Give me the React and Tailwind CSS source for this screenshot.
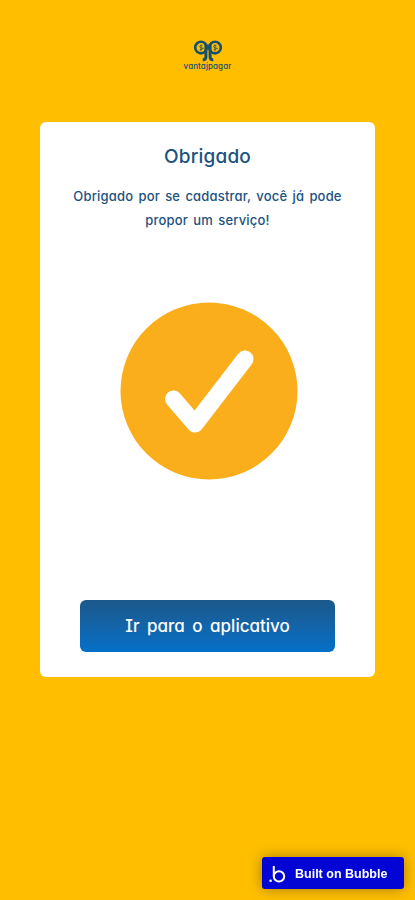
import React from 'react';

const Logo = () => (
    <div className="flex w-[50px] flex-col items-center text-[#17506f]">
        <svg width="30" height="23" viewBox="0 0 30 23" fill="none" stroke="currentColor">
            <circle cx="8" cy="8.6" r="5.8" strokeWidth="2.6" />
            <circle cx="22" cy="8.6" r="5.8" strokeWidth="2.6" />
            <path d="M12.9 5v13q0 2.8-3.2 3M17.1 5v13q0 2.8 3.2 3" strokeWidth="3" />
            <path d="M9.6 6.8q-3-1-3 .7t3 1.6-3 1.8M8 5.4v7M23.6 6.8q-3-1-3 .7t3 1.6-3 1.8M22 5.4v7" strokeWidth="0.9" opacity="0.85" />
        </svg>
        <span className="text-[8px] leading-[9px] font-medium tracking-[0.1px] whitespace-nowrap">vantajpagar</span>
    </div>
);

const SuccessIcon = () => (
    <svg className="mt-[70px] ml-[2px]" width="178" height="178" viewBox="0 0 178 178" fill="none">
        <circle cx="89" cy="89" r="88.5" fill="#fbae1b" />
        <path d="M53.5 97 75 122 125 57" stroke="#fff" strokeWidth="17" strokeLinecap="round" strokeLinejoin="round" />
    </svg>
);

const BubbleBadge = () => (
    <div className="fixed right-[11px] bottom-[11px] flex h-8 w-[142px] items-center rounded-[3px] bg-[#0205d3] pl-[7px] text-white shadow-[0_0_14px_rgba(0,0,0,0.35)]">
        <svg className="mt-px" width="17" height="18" viewBox="0 0 17 18" fill="none">
            <circle cx="1.6" cy="15.8" r="1.3" fill="currentColor" />
            <path d="M4.8 1v10.5" stroke="currentColor" strokeWidth="2" />
            <circle cx="10" cy="11.4" r="5.2" stroke="currentColor" strokeWidth="2" />
        </svg>
        <span className="mt-[3px] ml-[9px] font-['Liberation_Sans',sans-serif] text-[12.5px] font-bold whitespace-nowrap">Built on Bubble</span>
    </div>
);

const App = () => {
    return (
        <div className="flex h-[900px] w-full flex-col items-center bg-[#ffbf00] pt-[39px] font-['Inter',sans-serif] [font-feature-settings:'cv11','cv08']">
            <Logo />
            <main className="mt-[51px] flex h-[555px] w-[335px] flex-col items-center rounded-md bg-white pt-[21px] text-[#1b5280]">
                <h1 className="text-[19px] leading-7 font-medium tracking-[0.2px] whitespace-nowrap">Obrigado</h1>
                <p className="mt-[14px] text-center text-[13px] leading-[23.5px] font-medium tracking-[0.18px] whitespace-nowrap [word-spacing:1.6px]">
                    Obrigado por se cadastrar, você já pode
                    <br />
                    propor um serviço!
                </p>
                <SuccessIcon />
                <button className="mt-[120px] h-[52px] w-[255px] rounded-md bg-linear-to-b from-[#1b588a] to-[#0270c8] pt-[2px] text-[17px] font-medium text-white [word-spacing:3px]">
                    Ir para o aplicativo
                </button>
            </main>
            <BubbleBadge />
        </div>
    );
};

export default App;
